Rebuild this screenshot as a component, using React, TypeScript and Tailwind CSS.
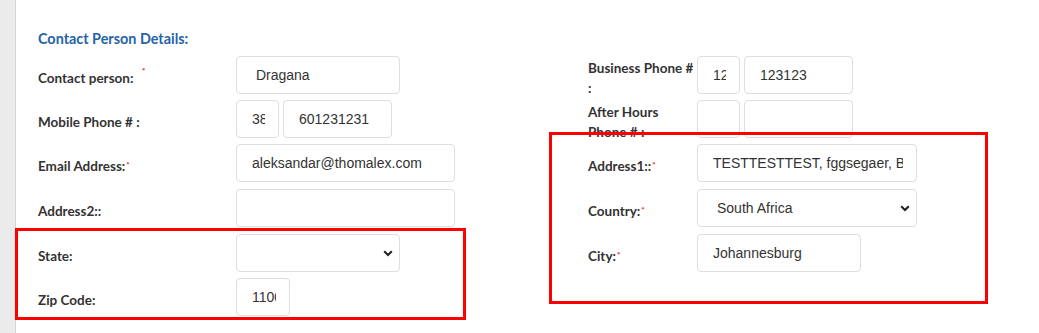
import React from "react";

const labelCls =
  "text-[13.5px] font-bold text-[#333333] leading-[20px] [font-family:Lato,'Open_Sans',sans-serif]";
const inputCls =
  "h-[38px] rounded-[4px] border border-[#dedede] bg-white pl-[15px] pr-[13px] text-[14px] text-[#333333] outline-none [font-family:'Liberation_Sans',Arial,sans-serif]";

function Req() {
  return <sup className="relative -top-[3px] ml-px text-[8px] text-[#ff0000]">*</sup>;
}

function Chevron() {
  return (
    <svg width="10" height="7" viewBox="0 0 10 7" className="pointer-events-none absolute right-[7px] top-[16px]">
      <path d="M1.2 1.3 L5 5 L8.8 1.3" fill="none" stroke="#222222" strokeWidth="2.1" />
    </svg>
  );
}

function Field({ value, w }: { value: string; w: string }) {
  return <input readOnly value={value} className={`${inputCls} ${w}`} />;
}

function Select({ value, w }: { value: string; w: string }) {
  return (
    <div className={`relative ${w}`}>
      <div className={`${inputCls} flex w-full items-center pl-[19px]`}>{value}</div>
      <Chevron />
    </div>
  );
}

function Row({
  label,
  children,
  labelW,
  extra = "",
  top = "pt-[12px]",
}: {
  label: React.ReactNode;
  children: React.ReactNode;
  labelW: string;
  extra?: string;
  top?: string;
}) {
  return (
    <div className={`flex h-[38px] ${extra}`}>
      <div className={`${labelW} shrink-0 whitespace-nowrap ${top} ${labelCls}`}>{label}</div>
      <div className="flex gap-[4px]">{children}</div>
    </div>
  );
}

export default function App() {
  return (
    <div className="relative flex h-[333px] w-[1039px] overflow-hidden bg-white">
      <div className="w-[16px] shrink-0 border-r border-[#d6d6d6] bg-[#ebebeb]" />

      <div className="flex-1 pl-[22px] pt-[29px]">
        <h3 className="text-[14.4px] font-bold leading-[19px] text-[#2563a8] [font-family:Lato,'Open_Sans',sans-serif]">
          Contact Person Details:
        </h3>

        <div className="mt-[8px] flex">
          {/* left column */}
          <div className="flex w-[550px] shrink-0 flex-col gap-[6px]">
            <Row
              labelW="w-[198px]"
              label={
                <span className="relative">
                  Contact person:
                  <span className="absolute left-[104px] -top-[9px] text-[8px] text-[#ff0000]">*</span>
                </span>
              }
            >
              <Field value=" Dragana" w="w-[164px]" />
            </Row>
            <Row labelW="w-[198px]" label="Mobile Phone # :">
              <Field value="385" w="w-[43px]" />
              <Field value="601231231" w="w-[109px]" />
            </Row>
            <Row labelW="w-[198px]" label={<>Email Address:<Req /></>}>
              <Field value="aleksandar@thomalex.com" w="w-[219px]" />
            </Row>
            <Row labelW="w-[198px]" label="Address2::" extra="mt-px">
              <Field value="" w="w-[219px]" />
            </Row>
            <Row labelW="w-[198px]" label="State:" extra="mt-px">
              <Select value="" w="w-[164px]" />
            </Row>
            <Row labelW="w-[198px]" label="Zip Code:">
              <Field value="11000" w="w-[54px]" />
            </Row>
          </div>

          {/* right column */}
          <div className="flex flex-col gap-[6px]">
            <Row labelW="w-[109px]" label={<>Business Phone #<br />:</>} top="pt-[2px]">
              <Field value="12" w="w-[43px]" />
              <Field value="123123" w="w-[109px]" />
            </Row>
            <Row labelW="w-[109px]" label={<>After Hours<br />Phone # :</>} top="pt-[2px]">
              <Field value="" w="w-[43px]" />
              <Field value="" w="w-[109px]" />
            </Row>
            <Row labelW="w-[109px]" label={<>Address1::<Req /></>}>
              <Field value="TESTTESTTEST, fggsegaer, Belgrade" w="w-[220px]" />
            </Row>
            <Row labelW="w-[109px]" label={<>Country:<Req /></>} extra="mt-px">
              <Select value="South Africa" w="w-[220px]" />
            </Row>
            <Row labelW="w-[109px]" label={<>City:<Req /></>} extra="mt-px">
              <Field value="Johannesburg" w="w-[164px]" />
            </Row>
          </div>
        </div>
      </div>

      {/* red highlight annotations */}
      <div className="pointer-events-none absolute left-[15px] top-[228px] h-[92px] w-[451px] border-[3px] border-[#ff0000]" />
      <div className="pointer-events-none absolute left-[549px] top-[132px] h-[172px] w-[439px] border-[3px] border-[#ff0000]" />
    </div>
  );
}
